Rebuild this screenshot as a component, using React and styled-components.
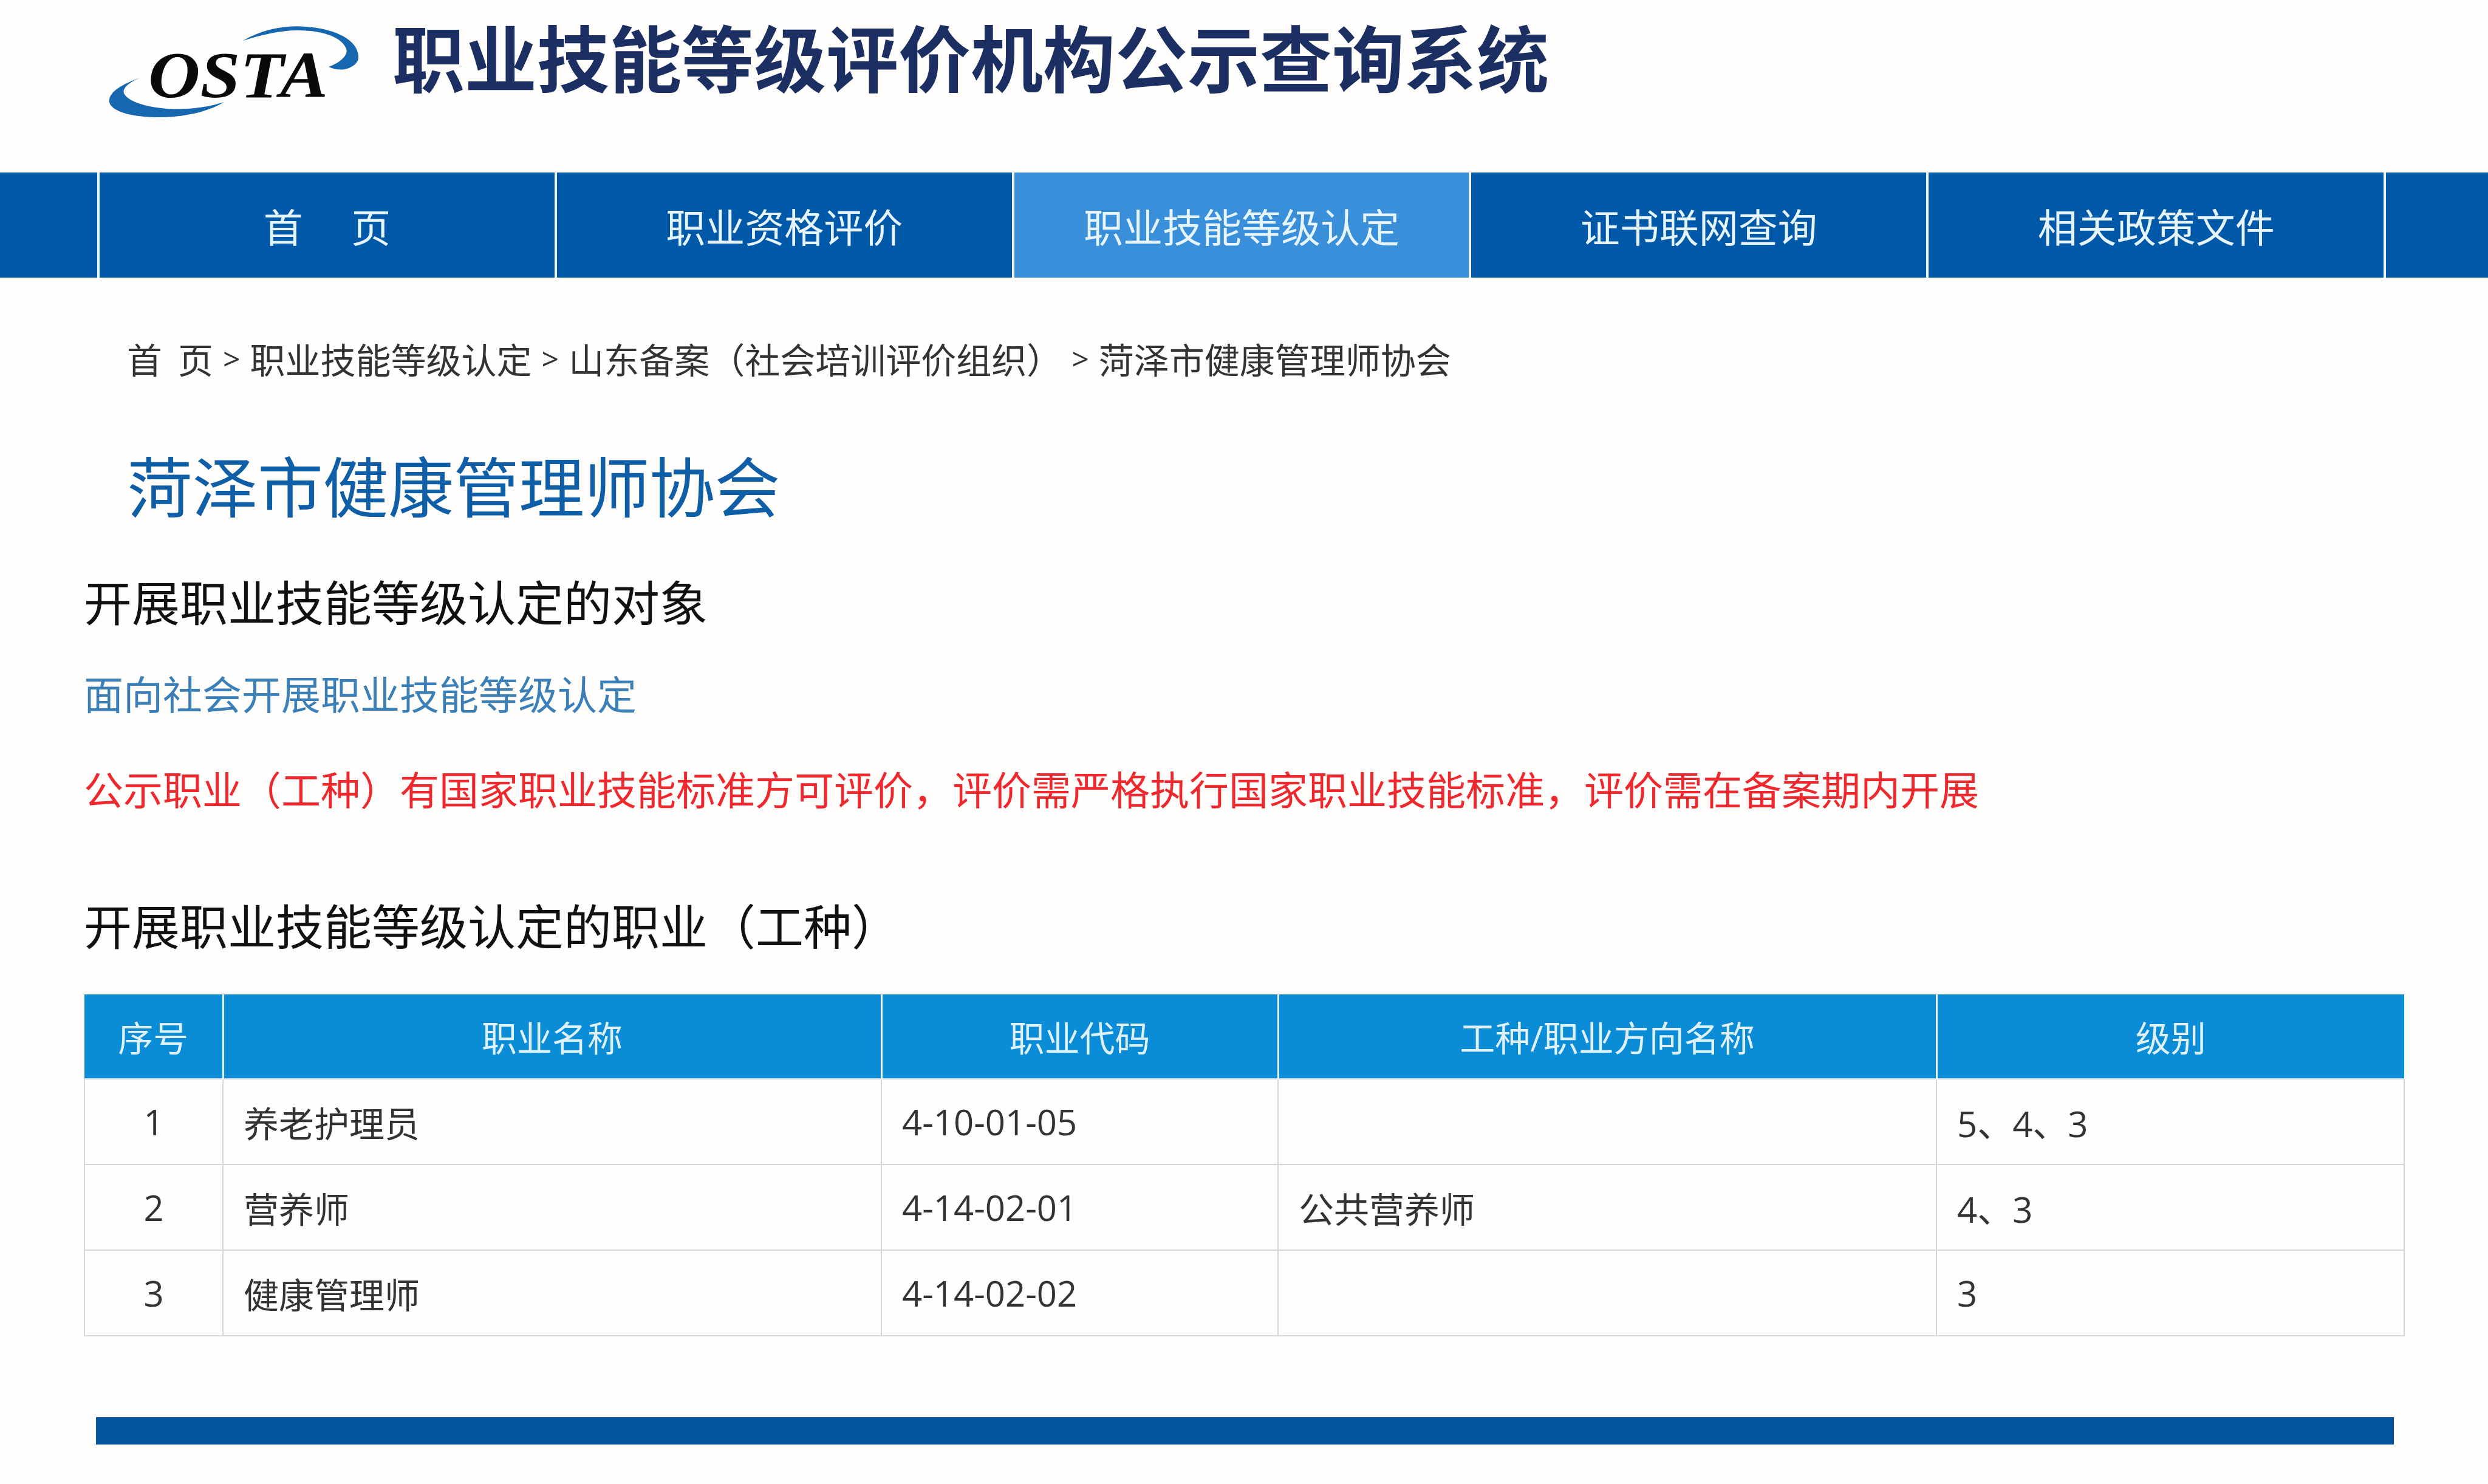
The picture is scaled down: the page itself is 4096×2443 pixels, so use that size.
import React from "react";
import styled, { createGlobalStyle } from "styled-components";

const cjk = `"Noto Sans CJK SC", "Noto Sans", sans-serif`;
const mixed = `"Open Sans", "Noto Sans CJK SC", sans-serif`;

const Global = createGlobalStyle`
  html, body { margin: 0; padding: 0; background: #fffefc; }
  body { font-family: ${cjk}; }
`;

const Page = styled.div`
  width: 4096px;
  height: 2443px;
  overflow: hidden;
  background: #fffefc;
`;

const Header = styled.header`
  height: 284px;
  box-sizing: border-box;
  display: flex;
  align-items: flex-start;
  padding: 43px 0 0 180px;
  gap: 56px;
`;

const Title = styled.h1`
  margin: -22px 0 0;
  font-size: 119px;
  line-height: 140px;
  font-weight: 700;
  color: #1b2f63;
  white-space: nowrap;
`;

const Nav = styled.nav`
  height: 173px;
  display: flex;
  padding-left: 160px;
  background: #0058a8;
`;

const NavItem = styled.a`
  width: 753px;
  box-sizing: border-box;
  border-left: 4px solid #eef6fc;
  display: flex;
  align-items: center;
  justify-content: center;
  font-size: 65px;
  font-weight: 400;
  color: #e6f4fd;
  white-space: pre;
  background: ${(p) => (p.$active ? "#398fd9" : "transparent")};
  &:last-child { width: 172px; border-right: none; }
`;

const Main = styled.main`
  padding: 0 139px 0 138px;
`;

const Crumbs = styled.div`
  height: 92px;
  margin-top: 87px;
  padding-left: 71px;
  display: flex;
  align-items: center;
  gap: 16px;
  font-size: 58px;
  color: #333;
  white-space: pre;
`;

const CrumbSep = styled.span`
  font-family: "Open Sans", sans-serif;
  font-size: 50px;
  margin-left: ${(p) => p.$wide || 0}px;
`;

const OrgName = styled.h2`
  margin: 102px 0 0;
  padding-left: 71px;
  height: 116px;
  font-size: 108px;
  line-height: 116px;
  font-weight: 400;
  letter-spacing: -0.5px;
  color: #0f5ea8;
`;

const SectionTitle = styled.h3`
  margin: ${(p) => p.$top}px 0 0;
  height: 90px;
  font-size: 79px;
  line-height: 90px;
  font-weight: 400;
  color: #111;
`;

const Note = styled.p`
  margin: ${(p) => p.$top}px 0 0;
  height: 80px;
  font-size: 65px;
  line-height: 80px;
  color: ${(p) => p.$color};
  white-space: nowrap;
`;

const Table = styled.table`
  margin-top: 70px;
  width: 3819px;
  table-layout: fixed;
  border-collapse: collapse;
  font-family: ${mixed};
  font-size: 58px;
  color: #333;
`;

const Th = styled.th`
  height: 138px;
  padding: 0;
  font-weight: 400;
  color: #dff2fc;
  background: #0a8cd6;
  border-left: 3px solid #e9f6fd;
  &:first-child { border-left: none; }
`;

const Td = styled.td`
  height: 141px;
  padding: 0 0 0 33px;
  box-sizing: border-box;
  border: 2px solid #d3d5d8;
  text-align: ${(p) => (p.$center ? "center" : "left")};
  ${(p) => p.$center && "padding-left: 0;"}
`;

const FootBar = styled.div`
  margin: 133px 0 0 20px;
  width: 3783px;
  height: 45px;
  background: #04559c;
`;

function Logo() {
  return (
    <svg width="410" height="150" viewBox="180 43 410 150" style={{ flex: "none" }}>
      <path d="M400 67 C432 48 470 41 505 44 C556 48 592 68 590 96 C589 108 566 122 541 110 C558 104 574 92 570 80 C562 60 528 50 490 50 C460 50 428 58 400 67 Z" fill="#1767b0" />
      <path d="M231 128 C196 140 178 154 180 168 C183 184 220 194 268 193 C310 192 346 182 369 168 C338 178 300 182 266 178 C226 174 200 160 204 148 C207 140 218 133 231 128 Z" fill="#1767b0" />
      <text
        x="244"
        y="160"
        textLength="296"
        lengthAdjust="spacingAndGlyphs"
        fontFamily='"Liberation Serif", serif'
        fontWeight="700"
        fontStyle="italic"
        fontSize="108"
        fill="#0a0a0a"
      >
        OSTA
      </text>
    </svg>
  );
}

const navItems = ["首\u2003 页", "职业资格评价", "职业技能等级认定", "证书联网查询", "相关政策文件", ""];
const rows = [
  ["1", "养老护理员", "4-10-01-05", "", "5、4、3"],
  ["2", "营养师", "4-14-02-01", "公共营养师", "4、3"],
  ["3", "健康管理师", "4-14-02-02", "", "3"],
];

export default function App() {
  return (
    <Page>
      <Global />
      <Header>
        <Logo />
        <Title>职业技能等级评价机构公示查询系统</Title>
      </Header>
      <Nav>
        {navItems.map((t, i) => (
          <NavItem key={i} $active={i === 2}>{t}</NavItem>
        ))}
      </Nav>
      <Main>
        <Crumbs>
          <span>首  页</span>
          <CrumbSep>&gt;</CrumbSep>
          <span>职业技能等级认定</span>
          <CrumbSep>&gt;</CrumbSep>
          <span>山东备案（社会培训评价组织）</span>
          <CrumbSep>&gt;</CrumbSep>
          <span>菏泽市健康管理师协会</span>
        </Crumbs>
        <OrgName>菏泽市健康管理师协会</OrgName>
        <SectionTitle $top={90}>开展职业技能等级认定的对象</SectionTitle>
        <Note $top={66} $color="#3a7fb8">面向社会开展职业技能等级认定</Note>
        <Note $top={77} $color="#f0282d">公示职业（工种）有国家职业技能标准方可评价，评价需严格执行国家职业技能标准，评价需在备案期内开展</Note>
        <SectionTitle $top={140}>开展职业技能等级认定的职业（工种）</SectionTitle>
        <Table>
          <colgroup>
            <col style={{ width: 228 }} />
            <col style={{ width: 1084 }} />
            <col style={{ width: 653 }} />
            <col style={{ width: 1084 }} />
            <col style={{ width: 770 }} />
          </colgroup>
          <thead>
            <tr>
              {["序号", "职业名称", "职业代码", "工种/职业方向名称", "级别"].map((h) => (
                <Th key={h}>{h}</Th>
              ))}
            </tr>
          </thead>
          <tbody>
            {rows.map((r) => (
              <tr key={r[0]}>
                {r.map((c, i) => (
                  <Td key={i} $center={i === 0}>{c}</Td>
                ))}
              </tr>
            ))}
          </tbody>
        </Table>
        <FootBar />
      </Main>
    </Page>
  );
}
